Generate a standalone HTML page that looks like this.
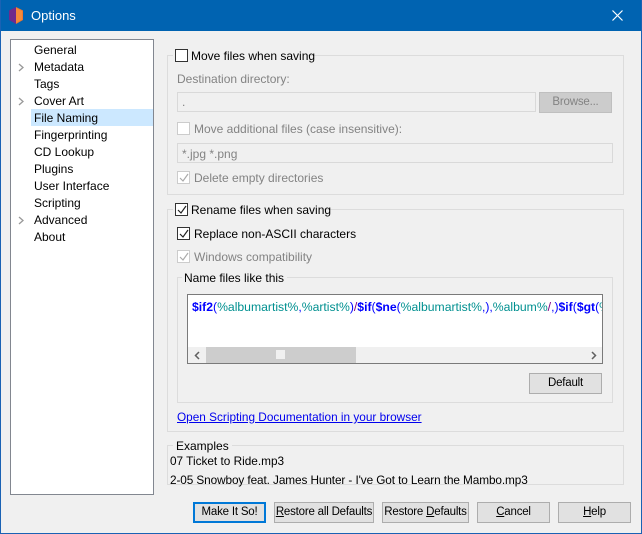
<!DOCTYPE html>
<html><head><style>
*{box-sizing:border-box;margin:0;padding:0}
body{width:642px;height:534px;background:#f0f0f0;font-family:"Liberation Sans",sans-serif;font-size:12px;color:#000;position:relative;overflow:hidden}
.a{position:absolute;white-space:nowrap}
.win{position:absolute;left:0;top:0;width:642px;height:534px;border:1px solid #1a62b4;border-top:none}
.title{position:absolute;left:0;top:0;width:642px;height:31px;background:#0063b1;color:#fff;font-size:13px}
.tree{position:absolute;left:10px;top:39px;width:144px;height:456px;background:#fff;border:1px solid #828790}
.ti{position:absolute;left:23px;height:17px;line-height:17px}
.gb{position:absolute;border:1px solid #dcdcdc}
.cb{position:absolute;width:13px;height:13px;border:1px solid #333;background:#fff}
.cb.d{border-color:#ccc}
.cb svg{position:absolute;left:1px;top:1px}
.dis{color:#838383}
.inp{position:absolute;border:1px solid #d9d9d9;background:#f0f0f0}
.btn{position:absolute;height:21px;border:1px solid #adadad;background:#e1e1e1;text-align:center;line-height:19px;white-space:nowrap;font-size:11.5px;letter-spacing:-0.2px}
</style></head><body>
<div class="title">
 <svg class="a" style="left:8px;top:7px" width="16" height="17" viewBox="0 0 16 17"><path d="M8 0L15 3.5V13L8 17Z" fill="#f0762d"/><path d="M8 0L1 3.5V13L8 17Z" fill="#6e2a8d"/><path d="M8 1L8 16L14 12.5V4Z" fill="#f58a3a"/></svg>
 <span class="a" style="left:31px;top:8px">Options</span>
 <svg class="a" style="left:612px;top:10px" width="11" height="11"><path d="M0.5 0.5L10.5 10.5M10.5 0.5L0.5 10.5" stroke="#fff" stroke-width="1.2"/></svg>
</div>
<div class="win"></div>
<div class="tree">
 <div class="a" style="left:20px;top:69px;width:122px;height:17px;background:#cce8ff"></div>
 <div class="ti" style="top:2px">General</div>
 <div class="ti" style="top:19px">Metadata</div><svg class="a" style="left:7px;top:23px" width="6" height="9"><path d="M1 1L5 4.5L1 8" stroke="#999" fill="none" stroke-width="1.3"/></svg>
 <div class="ti" style="top:36px">Tags</div>
 <div class="ti" style="top:53px">Cover Art</div><svg class="a" style="left:7px;top:57px" width="6" height="9"><path d="M1 1L5 4.5L1 8" stroke="#999" fill="none" stroke-width="1.3"/></svg>
 <div class="ti" style="top:70px">File Naming</div>
 <div class="ti" style="top:87px">Fingerprinting</div>
 <div class="ti" style="top:104px">CD Lookup</div>
 <div class="ti" style="top:121px">Plugins</div>
 <div class="ti" style="top:138px">User Interface</div>
 <div class="ti" style="top:155px">Scripting</div>
 <div class="ti" style="top:172px">Advanced</div><svg class="a" style="left:7px;top:176px" width="6" height="9"><path d="M1 1L5 4.5L1 8" stroke="#999" fill="none" stroke-width="1.3"/></svg>
 <div class="ti" style="top:189px">About</div>
</div>

<div class="gb" style="left:167px;top:55px;width:457px;height:140px"></div>
<div class="a" style="left:173px;top:48px;width:134px;height:16px;background:#f0f0f0"></div>
<div class="cb" style="left:175px;top:49px"></div>
<div class="a" style="left:191px;top:49px">Move files when saving</div>
<div class="a dis" style="left:177px;top:72px">Destination directory:</div>
<div class="inp" style="left:177px;top:92px;width:359px;height:20px"><span class="a dis" style="left:4px;top:2px">.</span></div>
<div class="btn dis" style="left:539px;top:92px;width:73px;background:#ccc;border-color:#bfbfbf">Browse...</div>
<div class="cb d" style="left:177px;top:122px"></div>
<div class="a dis" style="left:194px;top:122px">Move additional files (case insensitive):</div>
<div class="inp" style="left:177px;top:143px;width:436px;height:20px"><span class="a dis" style="left:4px;top:3px">*.jpg *.png</span></div>
<div class="cb d" style="left:177px;top:171px"><svg width="10" height="10"><path d="M1 5L4 8L9 1" stroke="#aaa" fill="none" stroke-width="1.2"/></svg></div>
<div class="a dis" style="left:194px;top:171px">Delete empty directories</div>

<div class="gb" style="left:167px;top:209px;width:457px;height:223px"></div>
<div class="a" style="left:173px;top:201px;width:148px;height:16px;background:#f0f0f0"></div>
<div class="cb" style="left:175px;top:203px"><svg width="10" height="10"><path d="M1 5L4 8L9 1" stroke="#222" fill="none" stroke-width="1.2"/></svg></div>
<div class="a" style="left:191px;top:203px">Rename files when saving</div>
<div class="cb" style="left:177px;top:227px"><svg width="10" height="10"><path d="M1 5L4 8L9 1" stroke="#222" fill="none" stroke-width="1.2"/></svg></div>
<div class="a" style="left:194px;top:227px">Replace non-ASCII characters</div>
<div class="cb d" style="left:177px;top:250px"><svg width="10" height="10"><path d="M1 5L4 8L9 1" stroke="#aaa" fill="none" stroke-width="1.2"/></svg></div>
<div class="a dis" style="left:194px;top:250px">Windows compatibility</div>

<div class="gb" style="left:177px;top:277px;width:436px;height:126px"></div>
<div class="a" style="left:182px;top:271px;padding:0 3px 0 2px;background:#f0f0f0">Name files like this</div>
<div class="a" style="left:187px;top:294px;width:416px;height:70px;border:1px solid #7a7a7a;background:#fff;overflow:hidden">
 <div class="a" style="left:4px;top:5px;font-size:12.2px;color:#009090"><b style="color:#00f">$if2</b><span style="color:#00f">(</span>%albumartist%<span style="color:#00f">,</span>%artist%<span style="color:#00f">)</span><span style="color:#800080">/</span><b style="color:#00f">$if</b><span style="color:#00f">(</span><b style="color:#00f">$ne</b><span style="color:#00f">(</span>%albumartist%<span style="color:#00f">,),</span>%album%<span style="color:#800080">/</span><span style="color:#00f">,)</span><b style="color:#00f">$if</b><span style="color:#00f">(</span><b style="color:#00f">$gt</b><span style="color:#00f">(</span>%to</div>
 <div class="a" style="left:0;top:52px;width:414px;height:16px;background:#f0f0f0"></div>
 <div class="a" style="left:18px;top:52px;width:150px;height:16px;background:#cdcdcd"></div>
 <div class="a" style="left:88px;top:55px;width:9px;height:9px;background:#f0f0f0"></div>
 <svg class="a" style="left:6px;top:56px" width="6" height="9"><path d="M5 1L1.5 4.5L5 8" stroke="#606060" fill="none" stroke-width="1.5"/></svg>
 <svg class="a" style="left:403px;top:56px" width="6" height="9"><path d="M1 1L4.5 4.5L1 8" stroke="#606060" fill="none" stroke-width="1.5"/></svg>
</div>
<div class="btn" style="left:529px;top:373px;width:73px">Default</div>
<div class="a" style="left:177px;top:410px;color:#0000ee;text-decoration:underline;font-size:11.8px">Open Scripting Documentation in your browser</div>

<div class="gb" style="left:167px;top:445px;width:457px;height:40px"></div>
<div class="a" style="left:173px;top:439px;padding:0 3px;background:#f0f0f0">Examples</div>
<div class="a" style="left:170px;top:454px;font-size:11.8px">07 Ticket to Ride.mp3</div>
<div class="a" style="left:170px;top:473px;font-size:11.8px;letter-spacing:-0.1px">2-05 Snowboy feat. James Hunter - I've Got to Learn the Mambo.mp3</div>

<div class="btn" style="left:193px;top:502px;width:73px;border:2px solid #0078d7;line-height:17px">Make It So!</div>
<div class="btn" style="left:274px;top:502px;width:100px"><u>R</u>estore all Defaults</div>
<div class="btn" style="left:382px;top:502px;width:87px">Restore <u>D</u>efaults</div>
<div class="btn" style="left:477px;top:502px;width:73px"><u>C</u>ancel</div>
<div class="btn" style="left:558px;top:502px;width:73px"><u>H</u>elp</div>
</body></html>
